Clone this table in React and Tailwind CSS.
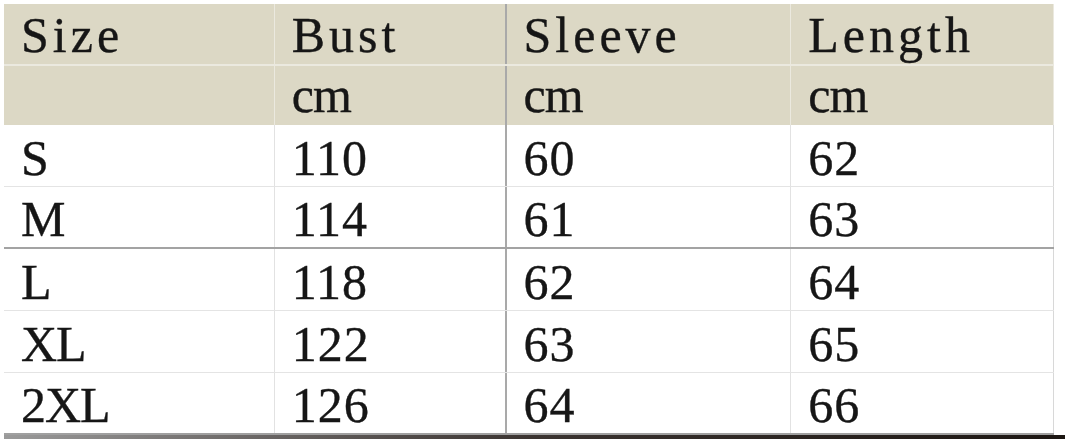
const columns = [
  { w: 'w-[271px]', border: 'border-r border-[#e2e2e2]' },
  { w: 'w-[232px]', border: 'border-r-2 border-[#a9a9a9]' },
  { w: 'w-[285px]', border: 'border-r border-[#e2e2e2]' },
  { w: 'w-[263px]', border: 'border-r border-[#d8d8d8]' },
]

const header = ['Size', 'Bust', 'Sleeve', 'Length']
const units = ['', 'cm', 'cm', 'cm']

const sizes = [
  ['S', '110', '60', '62'],
  ['M', '114', '61', '63'],
  ['L', '118', '62', '64'],
  ['XL', '122', '63', '65'],
  ['2XL', '126', '64', '66'],
]

// row separators under each data row (the one under M is the heavy one)
const rowBorders = [
  'border-b border-[#e4e4e4]',
  'border-b-2 border-[#a3a3a3]',
  'border-b border-[#e4e4e4]',
  'border-b border-[#e4e4e4]',
  'border-b-2 border-[#a0a0a0]',
]

const Cell = ({ col, children, tracking = '', extra = '' }) => (
  <div className={`${columns[col].w} ${columns[col].border} ${extra} h-full flex items-center pl-[17px] ${tracking}`}>
    {children}
  </div>
)

export default function App() {
  return (
    <div className="w-[1065px] h-[439px] bg-white pt-1 pl-1 overflow-hidden text-[50px] leading-none text-[#161616] [-webkit-text-stroke:0.35px_#161616] font-['Liberation_Serif','Times_New_Roman',serif]">
      {/* header */}
      <div className="w-[1050px] bg-[#dcd8c5]">
        <div className="flex h-[62px] border-b-2 border-[#ebe9df]">
          {header.map((h, i) => (
            <Cell key={h} col={i} tracking="tracking-[4px]" extra={i === 1 ? 'pt-[2px]' : '!border-[#ebe9df] pt-[2px]'}>{h}</Cell>
          ))}
        </div>
        <div className="flex h-[59px]">
          {units.map((u, i) => (
            <Cell key={i} col={i} tracking="tracking-[-1px]" extra={i === 1 ? 'pb-[2px]' : '!border-[#ebe9df] pb-[2px]'}>{u}</Cell>
          ))}
        </div>
      </div>

      {/* body */}
      <div className="w-[1050px]">
        {sizes.map((row, r) => (
          <div key={row[0]} className={`flex h-[62px] ${rowBorders[r]}`}>
            {row.map((v, i) => (
              <Cell key={i} col={i} extra="pt-[4px]" tracking={i === 0 ? 'tracking-[-1px]' : 'tracking-[1px]'}>{v}</Cell>
            ))}
          </div>
        ))}
      </div>

      {/* photo edge under the chart */}
      <div className="h-[6px] w-full bg-gradient-to-r from-[#9a9a9a] via-[#3a3330] to-[#1c1612]" />
    </div>
  )
}
